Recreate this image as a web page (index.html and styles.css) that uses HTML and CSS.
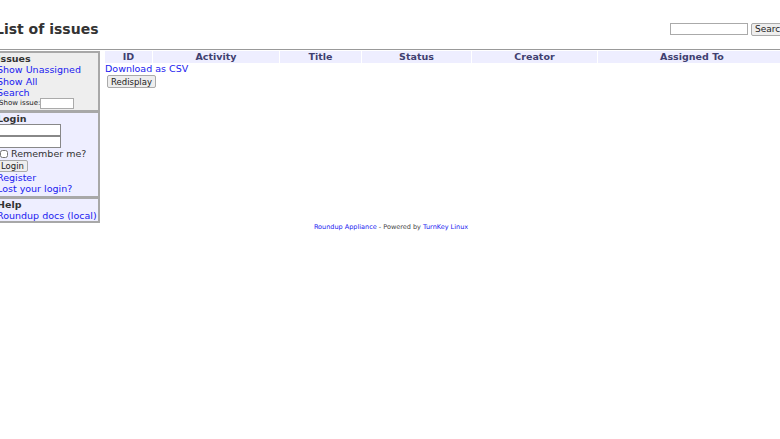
FILE: index.html
```html
<!DOCTYPE html>
<html lang="en">
<head>
    <title>List of issues - Roundup issue tracker</title>
    <link rel="stylesheet" href="styles.css">
</head>
<body>
    <div class="page">
        <div class="page-header">
            <h1 class="page-title">List of issues</h1>
            <form class="searchbox">
                <input type="text" class="search-input">
                <button type="button" class="search-btn">Search</button>
            </form>
        </div>

        <div class="page-body">
            <div class="sidebar">
                <div class="classblock">
                    <b>Issues</b>
                    <a href="#">Show Unassigned</a>
                    <a href="#">Show All</a>
                    <a href="#">Search</a>
                    <div class="show-issue">Show issue:<input type="text" class="issue-input"></div>
                </div>
                <div class="userblock">
                    <b>Login</b>
                    <input type="text" class="login-input">
                    <input type="password" class="login-input">
                    <label class="remember"><input type="checkbox" class="remember-box"> Remember me?</label>
                    <div class="login-row"><button type="button" class="small-btn">Login</button></div>
                    <a href="#">Register</a>
                    <a href="#">Lost your login?</a>
                </div>
                <div class="userblock last">
                    <b>Help</b>
                    <a href="#">Roundup docs (local)</a>
                </div>
            </div>

            <div class="content">
                <table class="list">
                    <thead>
                        <tr>
                            <th class="col-id">ID</th>
                            <th class="col-activity">Activity</th>
                            <th class="col-title">Title</th>
                            <th class="col-status">Status</th>
                            <th class="col-creator">Creator</th>
                            <th>Assigned To</th>
                        </tr>
                    </thead>
                    <tbody>
                        <!-- no issues yet -->
                    </tbody>
                </table>
                <a href="#" class="csv-link">Download as CSV</a>
                <div class="redisplay"><button type="button" class="small-btn">Redisplay</button></div>
            </div>
        </div>

        <div class="footer">
            <a href="#">Roundup Appliance</a> - Powered by <a href="#">TurnKey Linux</a>
        </div>
    </div>
</body>
</html>
```

FILE: styles.css
```css
body {
    font-family: 'DejaVu Sans', sans-serif;
    font-size: 9.5px;
    color: #333;
    margin: 0;
    padding: 0;
    background-color: white;
    overflow: hidden;
}
a {
    color: #2020f0;
    text-decoration: none;
}
/* page is a bit wider than the window */
.page {
    margin-left: -5px;
    width: 792px;
}
.page-header {
    display: flex;
    justify-content: space-between;
    align-items: center;
    padding: 21px 0 12px 0;
    border-bottom: 1px solid #999;
}
.page-title {
    font-size: 14px;
    font-weight: bold;
    line-height: 16px;
    margin: 0;
}
.searchbox {
    display: flex;
    gap: 3px;
    margin: 0;
}
.search-input {
    width: 74px;
    height: 8px;
    padding: 1px;
    border: 1px solid #aaa;
    font-size: 9px;
}
.search-btn {
    font-family: 'DejaVu Sans', sans-serif;
    font-size: 9px;
    color: #222;
    background-color: #eee;
    border: 1px solid #aaa;
    border-radius: 2px;
    padding: 0 3px;
    height: 13px;
    width: 36px;
    text-align: left;
}
.page-body {
    display: flex;
    margin-top: 1px;
}
/* left column boxes */
.sidebar {
    width: 105px;
    flex: none;
}
.classblock,
.userblock {
    display: flex;
    flex-direction: column;
    align-items: flex-start;
    border: 1px solid #a8a8a8;
    border-top-width: 2px;
    border-right-width: 2px;
    border-left: none;
    padding: 0 0 0 2px;
    line-height: 11.3px;
    white-space: nowrap;
}
.classblock {
    background-color: #eee;
}
.userblock {
    background-color: #eef;
    padding-bottom: 1px;
}
.userblock.last {
    padding-bottom: 0;
    border-bottom-width: 2px;
}
.sidebar b {
    color: #333;
}
.show-issue {
    display: flex;
    align-items: center;
    font-size: 7px;
    color: #222;
    height: 11.5px;
    margin-left: 2px;
}
.issue-input {
    width: 30px;
    height: 7px;
    padding: 1px;
    border: 1px solid #aaa;
    margin: 0;
}
.login-input {
    width: 60px;
    height: 8px;
    padding: 1px;
    margin: 0;
    border: 1px solid #888;
}
.remember {
    display: flex;
    align-items: center;
    height: 12px;
    margin-left: 3px;
}
.remember-box {
    width: 8px;
    height: 8px;
    margin: 0 3px 0 0;
}
.login-row {
    height: 12px;
}
.small-btn {
    font-family: 'DejaVu Sans', sans-serif;
    font-size: 8.5px;
    color: #222;
    background-color: #eee;
    border: 1px solid #aaa;
    border-radius: 2px;
    padding: 0 3px;
    height: 12px;
    line-height: 10px;
    margin: 0;
}
.content {
    flex: 1;
    margin-left: 5px;
}
/* issue list table */
.list {
    width: 100%;
    border-collapse: collapse;
}
.list th {
    background-color: #eef;
    color: #404070;
    font-weight: bold;
    height: 12px;
    line-height: 12px;
    padding: 0;
    border-right: 1px solid white;
}
.col-id { width: 47px; }
.col-activity { width: 126px; }
.col-title { width: 81px; }
.col-status { width: 109px; }
.col-creator { width: 125px; }
.csv-link {
    display: block;
    line-height: 12px;
}
.redisplay {
    padding-left: 2px;
}
.redisplay .small-btn {
    height: 13px;
}
.footer {
    text-align: center;
    font-size: 6.5px;
    color: #444;
    line-height: 8px;
}
```
